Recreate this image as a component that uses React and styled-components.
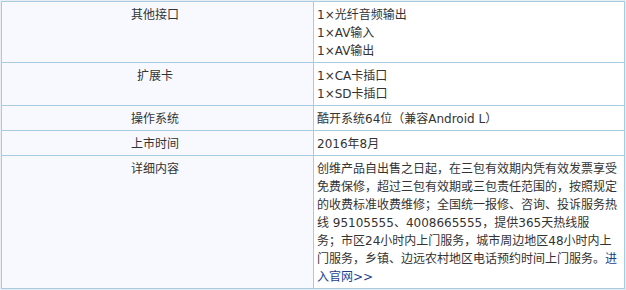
import React from "react";
import styled, { createGlobalStyle } from "styled-components";

const GlobalStyle = createGlobalStyle`
  html, body {
    margin: 0;
    padding: 0;
    background: #e9eef2;
  }
  body {
    font-family: "DejaVu Sans", "Noto Sans CJK SC", sans-serif;
    font-size: 12px;
    color: #333;
  }
`;

const Wrapper = styled.section`
  padding: 1px 0 0 1px;
`;

const Table = styled.div`
  display: grid;
  grid-template-columns: 311px 310px;
  gap: 1px;
  padding: 1px;
  width: max-content;
  background-color: #a7cbe0;
`;

const Label = styled.div`
  background-color: #f7f9fe;
  text-align: center;
  padding: 4px 5px 2px 0;
  line-height: 18px;
`;

const Value = styled.div`
  background-color: #fff;
  padding: 4px 4px 2px 3px;
  line-height: 18px;
`;

const Line = styled.div`
  white-space: nowrap;
`;

const Link = styled.a`
  color: #1c3f8c;
  text-decoration: none;
`;

const specs = [
  { label: "其他接口", lines: ["1×光纤音频输出", "1×AV输入", "1×AV输出"] },
  { label: "扩展卡", lines: ["1×CA卡插口", "1×SD卡插口"] },
  { label: "操作系统", lines: ["酷开系统64位（兼容Android L）"] },
  { label: "上市时间", lines: ["2016年8月"] },
];

const detail = [
  "创维产品自出售之日起，在三包有效期内凭有效发票享受",
  "免费保修，超过三包有效期或三包责任范围的，按照规定",
  "的收费标准收费维修；全国统一报修、咨询、投诉服务热",
  "线 95105555、4008665555，提供365天热线服",
  "务；市区24小时内上门服务，城市周边地区48小时内上",
];

export default function App() {
  return (
    <>
      <GlobalStyle />
      <Wrapper>
        <Table>
          {specs.map((row) => (
            <React.Fragment key={row.label}>
              <Label>{row.label}</Label>
              <Value>
                {row.lines.map((line) => (
                  <Line key={line}>{line}</Line>
                ))}
              </Value>
            </React.Fragment>
          ))}
          <Label>详细内容</Label>
          <Value>
            {detail.map((line) => (
              <Line key={line}>{line}</Line>
            ))}
            <Line>
              门服务，乡镇、边远农村地区电话预约时间上门服务。
              <Link href="#">进</Link>
            </Line>
            <Line>
              <Link href="#">入官网&gt;&gt;</Link>
            </Line>
          </Value>
        </Table>
      </Wrapper>
    </>
  );
}
